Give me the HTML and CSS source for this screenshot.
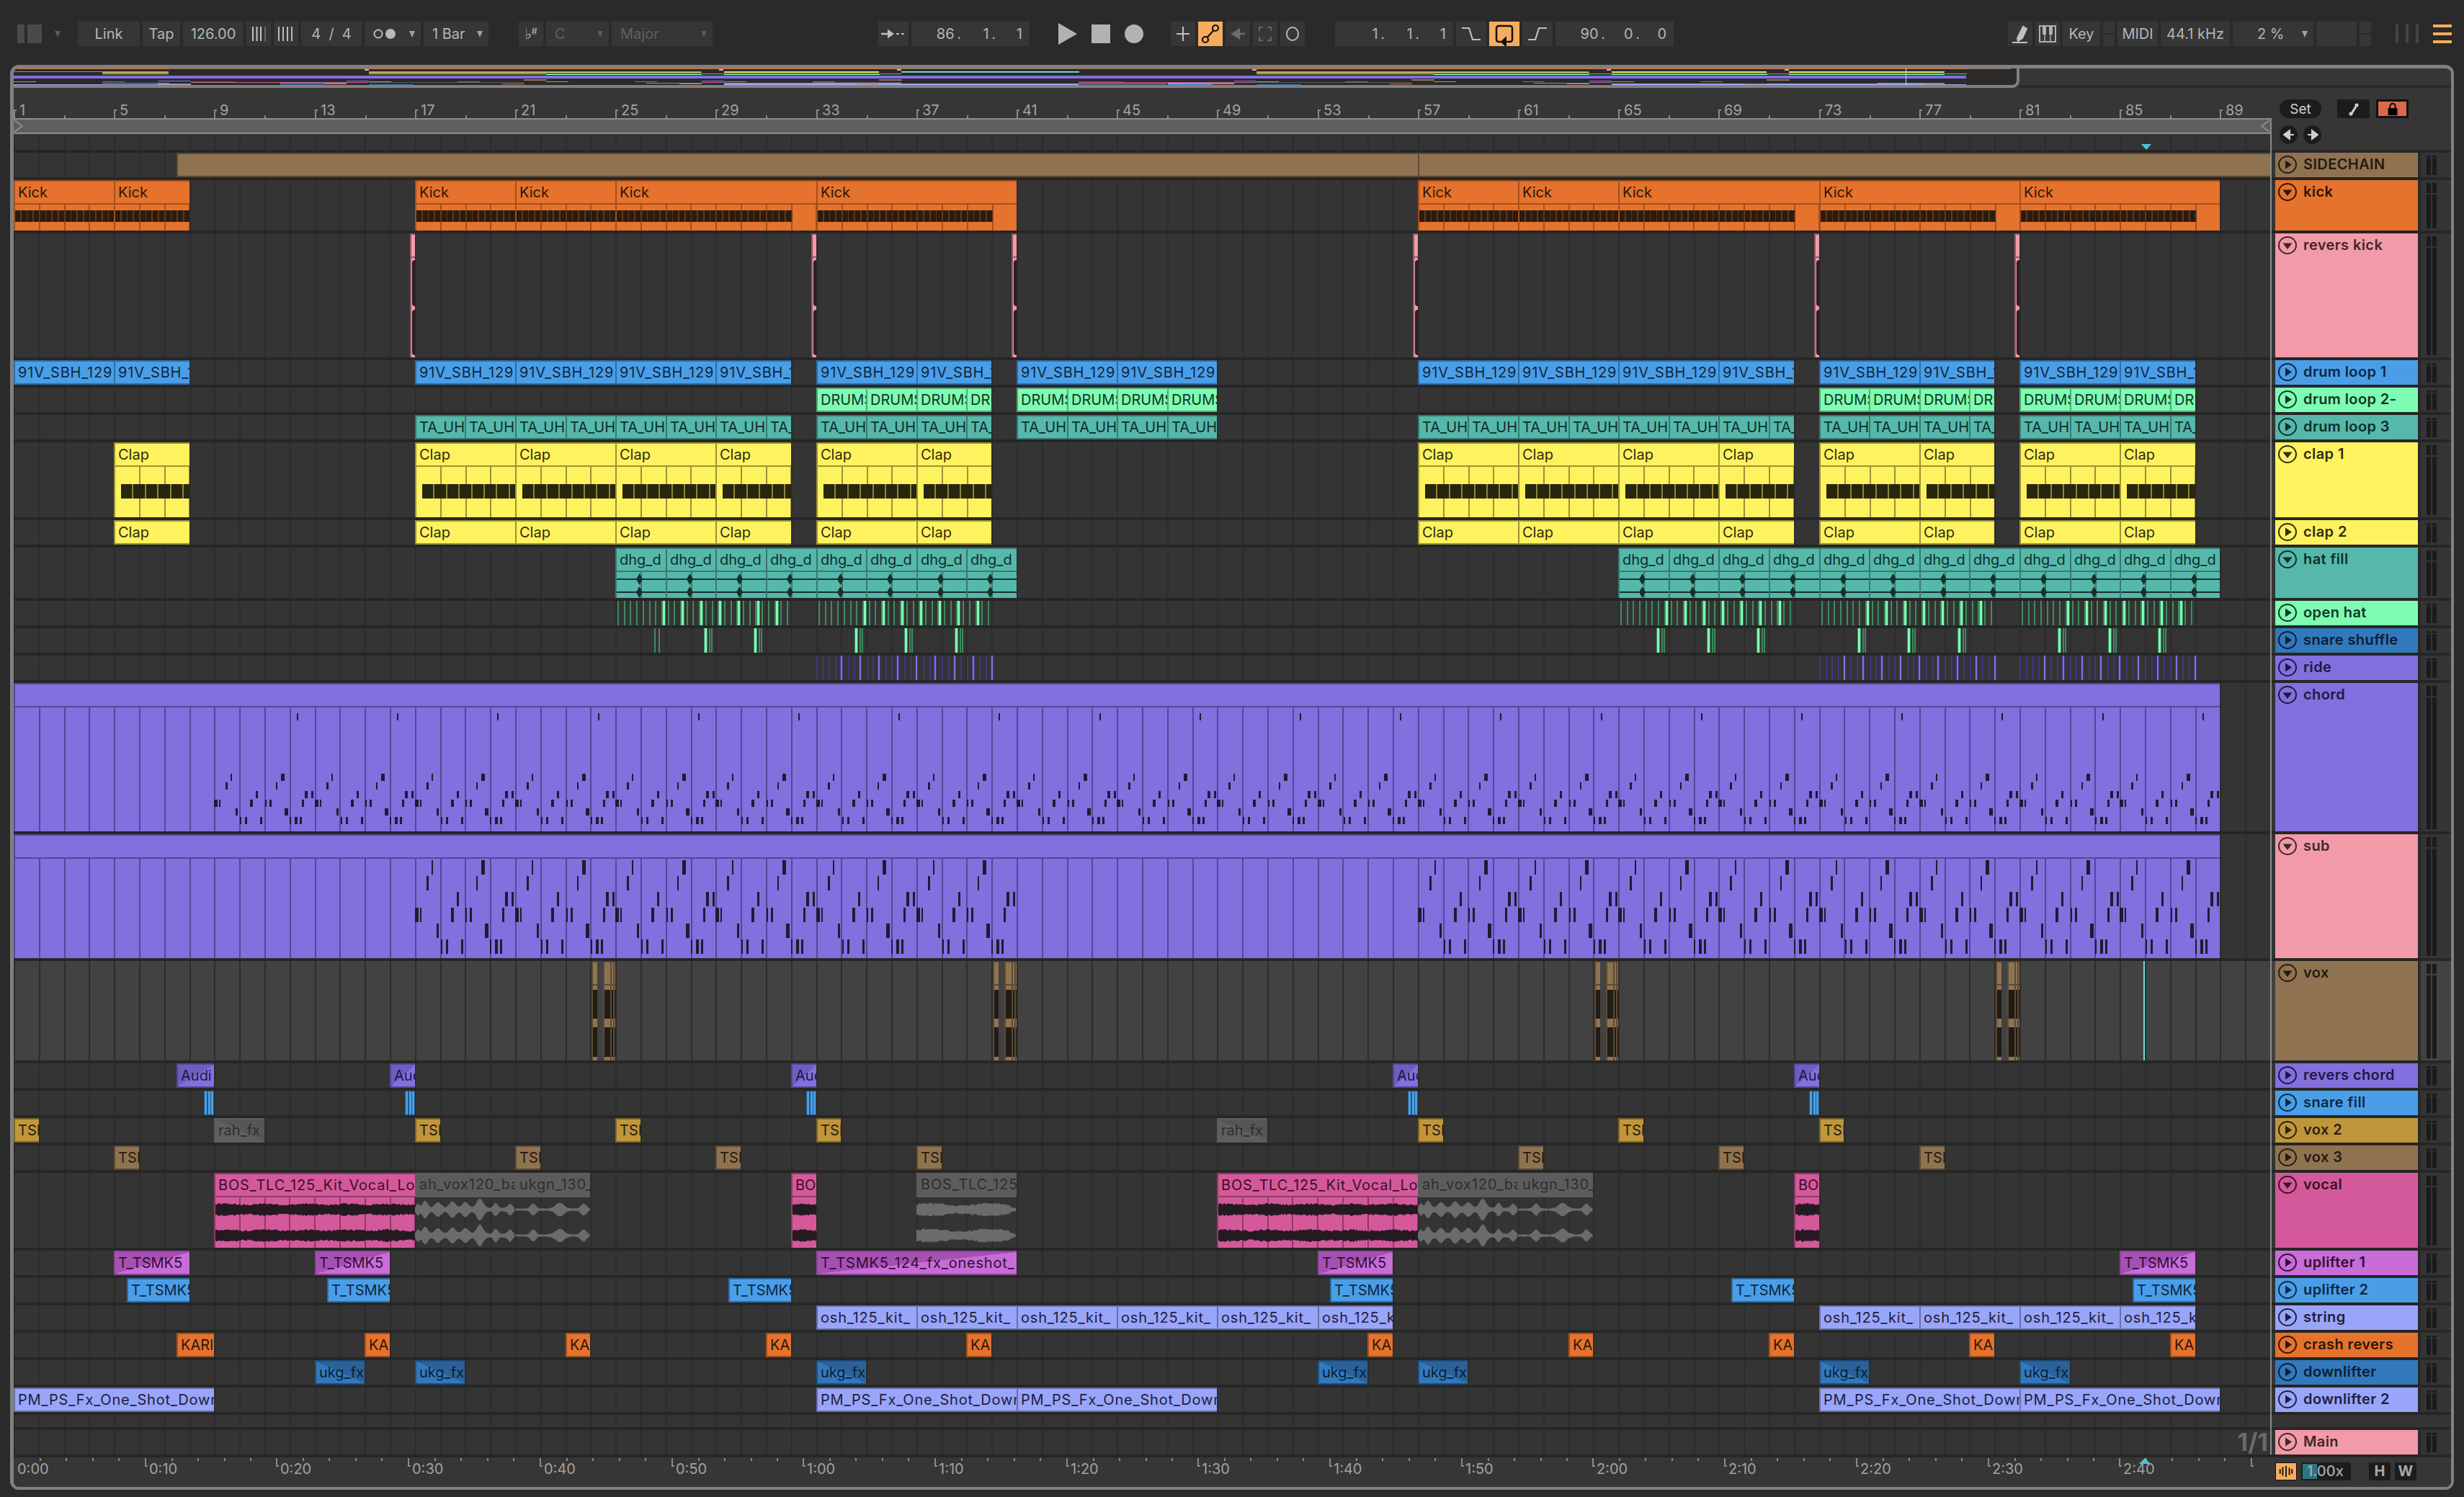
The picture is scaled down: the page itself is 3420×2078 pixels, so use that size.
FILE: index.html
```html
<!DOCTYPE html>
<html lang="en">
<head>
<meta charset="utf-8">
<title>Arrangement</title>
<link rel="stylesheet" href="styles.css">
</head>
<body>
<svg class="defs" width="0" height="0" aria-hidden="true">
  <symbol id="i-play" viewBox="0 0 26 25"><ellipse cx="13" cy="12.5" rx="12" ry="11.5" fill="none" stroke="currentColor" stroke-width="2"/><path d="M10 6.5 19 12.500 10 18.500Z" fill="currentColor"/></symbol>
  <symbol id="i-fold" viewBox="0 0 26 25"><ellipse cx="13" cy="12.5" rx="12" ry="11.5" fill="none" stroke="currentColor" stroke-width="2"/><path d="M6.500 9.500H19.500L13 18Z" fill="currentColor"/></symbol>
</svg>

<header class="toolbar">
  <div class="tb-layout"><i class="lay-a"></i><i class="lay-b"></i><i class="caret dim"></i></div>
  <div class="tb-group">
    <div class="btn w86">Link</div>
    <div class="btn w52">Tap</div>
    <div class="btn w84">126.00</div>
    <div class="btn w34"><svg class="ico" viewBox="0 0 34 34"><path d="M9 7v20M14.500 7v20M20 7v20" stroke="#c4c4c4" stroke-width="2"/><path d="M26 7v20" stroke="#777" stroke-width="1.500"/></svg></div>
    <div class="btn w34"><svg class="ico" viewBox="0 0 34 34"><path d="M7 7v20M13 7v20M19 7v20M25 7v20" stroke="#b8b8b8" stroke-width="2"/></svg></div>
    <div class="btn w84">4&nbsp;&nbsp;/&nbsp;&nbsp;4</div>
    <div class="btn w78 spread"><svg class="ico-oo" viewBox="0 0 36 24"><circle cx="7" cy="12" r="5.500" fill="none" stroke="#b8b8b8" stroke-width="2"/><circle cx="24" cy="12" r="7" fill="#b8b8b8"/></svg><i class="caret"></i></div>
    <div class="btn w90 spread"><span>1 Bar</span><i class="caret"></i></div>
  </div>
  <div class="tb-group ml42">
    <div class="btn w34 keysig"><span>♭</span><sup>#</sup></div>
    <div class="btn w87 spread off"><span>C</span><i class="caret dim"></i></div>
    <div class="btn w140 spread off"><span>Major</span><i class="caret dim"></i></div>
  </div>
  <div class="tb-group ml230">
    <div class="btn w42"><svg class="ico" viewBox="0 0 42 34"><path d="M4 17h12" stroke="#bdbdbd" stroke-width="2.500"/><path d="M13 10.500 22 17 13 23.500Z" fill="#bdbdbd"/><path d="M25 17h4M32 17h4" stroke="#bdbdbd" stroke-width="2"/></svg></div>
    <div class="btn w164 pos"><span class="seg-a">86&thinsp;.</span><span class="seg-b">1&thinsp;.</span><span class="seg-c">1</span></div>
  </div>
  <div class="tb-transport ml40">
    <svg class="t-play" viewBox="0 0 26 30"><path d="M0 0 26 15 0 30Z"/></svg>
    <i class="t-stop"></i>
    <i class="t-rec"></i>
  </div>
  <div class="tb-group ml38">
    <div class="btn w34"><svg class="ico" viewBox="0 0 34 34"><path d="M17 7v20M8 17h18" stroke="#c0c0c0" stroke-width="2"/></svg></div>
    <div class="btn w34 on"><svg class="ico" viewBox="0 0 34 34"><circle cx="10" cy="25" r="4" fill="none" stroke="#111" stroke-width="2.200"/><circle cx="24" cy="9" r="4" fill="none" stroke="#111" stroke-width="2.200"/><path d="M12.500 22 21.500 12" stroke="#111" stroke-width="2.200"/></svg></div>
    <div class="btn w34"><svg class="ico" viewBox="0 0 34 34"><path d="M8 17h8M19 11l-9 6 9 6ZM16 17h11" stroke="#6e6e6e" stroke-width="2.500" fill="#6e6e6e"/></svg></div>
    <div class="btn w34"><svg class="ico" viewBox="0 0 34 34"><path d="M14 8H9v5M20 8h5v5M14 26H9v-5M20 26h5v-5" stroke="#666" stroke-width="2" fill="none"/></svg></div>
    <div class="btn w34"><svg class="ico" viewBox="0 0 34 34"><ellipse cx="17" cy="17" rx="8" ry="9" fill="none" stroke="#b8b8b8" stroke-width="2"/></svg></div>
  </div>
  <div class="tb-group ml42">
    <div class="btn w164 pos"><span class="seg-a">1&thinsp;.</span><span class="seg-b">1&thinsp;.</span><span class="seg-c">1</span></div>
    <div class="btn w42"><svg class="ico" viewBox="0 0 42 34"><path d="M8 9h10l5 16h11" stroke="#c0c0c0" stroke-width="2.200" fill="none"/></svg></div>
    <div class="btn w42 on"><svg class="ico" viewBox="0 0 42 34"><path d="M16 28h-3a3 3 0 0 1-3-3V9a3 3 0 0 1 3-3h16a3 3 0 0 1 3 3v16a3 3 0 0 1-3 3h-3" stroke="#111" stroke-width="2.500" fill="none"/><path d="M26 28H19M23 22.500l-6 5.500 6 5.500Z" stroke="#111" stroke-width="2" fill="#111"/></svg></div>
    <div class="btn w42"><svg class="ico" viewBox="0 0 42 34"><path d="M8 25h10l5-16h11" stroke="#c0c0c0" stroke-width="2.200" fill="none"/></svg></div>
    <div class="btn w164 pos"><span class="seg-a">90&thinsp;.</span><span class="seg-b">0&thinsp;.</span><span class="seg-c">0</span></div>
  </div>
  <div class="tb-group ml464">
    <div class="btn w34"><svg class="ico" viewBox="0 0 34 34"><path d="M13 23 21 7l5 3-6 13-6 4ZM6 29h21" fill="#c0c0c0" stroke="#c0c0c0" stroke-width="2"/></svg></div>
    <div class="btn w34"><svg class="ico" viewBox="0 0 34 34"><rect x="6" y="6" width="22" height="22" fill="none" stroke="#b0b0b0" stroke-width="2"/><path d="M13 6v22M21 6v22" stroke="#b0b0b0" stroke-width="1.500"/><path d="M10 6h5v12h-5ZM19 6h5v12h-5Z" fill="#b0b0b0"/></svg></div>
    <div class="btn w52">Key</div>
    <div class="split w16"><i></i><i></i></div>
    <div class="btn w56">MIDI</div>
    <div class="btn w96">44.1 kHz</div>
    <div class="btn w112 spread center-left"><span>2 %</span><i class="caret"></i></div>
    <div class="btn w56"></div>
    <div class="split w16"><i></i><i></i></div>
  </div>
  <div class="tb-bars ml34"><i></i><i></i><i></i></div>
  <div class="tb-menu ml18"><i></i><i></i><i></i></div>
</header>

<main class="frame">
  <div class="overview">
    <div class="ov-track" id="ov"></div>
    <div class="ov-rest"></div>
  </div>

  <div class="top-area">
    <div class="top-left">
      <div class="ruler" id="bars"></div>
      <div class="loopstrip">
        <svg class="loop-l" viewBox="0 0 14 18"><path d="M1 1 12 9 1 17" fill="none" stroke="#8d8d8d" stroke-width="2"/></svg>
        <svg class="loop-r" viewBox="0 0 14 18"><path d="M13 1 2 9 13 17" fill="none" stroke="#8d8d8d" stroke-width="2"/></svg>
      </div>
      <div class="toplane lane-grid"><i class="cursor-tri"></i></div>
    </div>
    <div class="side">
      <div class="side-row">
        <div class="pill set">Set</div>
        <div class="sq"><svg viewBox="0 0 26 20" class="sq-ico"><path d="M9 18 16 7" stroke="#d0d0d0" stroke-width="3"/><circle cx="17" cy="5" r="2.500" fill="#d0d0d0"/><circle cx="9" cy="17" r="2.500" fill="#d0d0d0"/></svg></div>
        <div class="sq lock"><svg viewBox="0 0 26 22" class="sq-ico"><path d="M9 10V7a4 4 0 0 1 8 0v3" fill="none" stroke="#000" stroke-width="2"/><rect x="6" y="10" width="14" height="11" fill="#000"/></svg></div>
      </div>
      <div class="side-row small">
        <div class="pill arrow"><svg viewBox="0 0 16 16"><path d="M15 8H7M9 2 1 8l8 6Z" stroke="#cfcfcf" stroke-width="2" fill="#cfcfcf"/></svg></div>
        <div class="pill arrow"><svg viewBox="0 0 16 16"><path d="M1 8h8M7 2l8 6-8 6Z" stroke="#cfcfcf" stroke-width="2" fill="#cfcfcf"/></svg></div>
      </div>
    </div>
  </div>

  <section class="tracks">
    <div class="row h34 t-tan"><div class="lane" data-track="sidechain"></div><div class="head"><svg class="fold"><use href="#i-play"/></svg><span class="name">SIDECHAIN</span></div><div class="gutter"></div><div class="meter"><i></i><i></i></div></div>
    <div class="row tall h70 t-orange"><div class="lane" data-track="kick"></div><div class="head"><svg class="fold"><use href="#i-fold"/></svg><span class="name">kick</span></div><div class="gutter"></div><div class="meter"><i></i><i></i></div></div>
    <div class="row tall h172 t-pink"><div class="lane" data-track="reverskick"></div><div class="head"><svg class="fold"><use href="#i-fold"/></svg><span class="name">revers kick</span></div><div class="gutter"></div><div class="meter"><i></i><i></i></div></div>
    <div class="row h34 t-blue"><div class="lane" data-track="dl1"></div><div class="head"><svg class="fold"><use href="#i-play"/></svg><span class="name">drum loop 1</span></div><div class="gutter"></div><div class="meter"><i></i><i></i></div></div>
    <div class="row h34 t-mint"><div class="lane" data-track="dl2"></div><div class="head"><svg class="fold"><use href="#i-play"/></svg><span class="name">drum loop 2-</span></div><div class="gutter"></div><div class="meter"><i></i><i></i></div></div>
    <div class="row h34 t-teal"><div class="lane" data-track="dl3"></div><div class="head"><svg class="fold"><use href="#i-play"/></svg><span class="name">drum loop 3</span></div><div class="gutter"></div><div class="meter"><i></i><i></i></div></div>
    <div class="row tall h104 t-yellow"><div class="lane" data-track="clap1"></div><div class="head"><svg class="fold"><use href="#i-fold"/></svg><span class="name">clap 1</span></div><div class="gutter"></div><div class="meter"><i></i><i></i></div></div>
    <div class="row h34 t-yellow"><div class="lane" data-track="clap2"></div><div class="head"><svg class="fold"><use href="#i-play"/></svg><span class="name">clap 2</span></div><div class="gutter"></div><div class="meter"><i></i><i></i></div></div>
    <div class="row tall h70 t-teal"><div class="lane" data-track="hat"></div><div class="head"><svg class="fold"><use href="#i-fold"/></svg><span class="name">hat fill</span></div><div class="gutter"></div><div class="meter"><i></i><i></i></div></div>
    <div class="row h34 t-mint"><div class="lane" data-track="openhat"></div><div class="head"><svg class="fold"><use href="#i-play"/></svg><span class="name">open hat</span></div><div class="gutter"></div><div class="meter"><i></i><i></i></div></div>
    <div class="row h34 t-navy"><div class="lane" data-track="snare"></div><div class="head"><svg class="fold"><use href="#i-play"/></svg><span class="name">snare shuffle</span></div><div class="gutter"></div><div class="meter"><i></i><i></i></div></div>
    <div class="row h34 t-violet"><div class="lane" data-track="ride"></div><div class="head"><svg class="fold"><use href="#i-play"/></svg><span class="name">ride</span></div><div class="gutter"></div><div class="meter"><i></i><i></i></div></div>
    <div class="row tall h206 t-violet"><div class="lane" data-track="chord"></div><div class="head"><svg class="fold"><use href="#i-fold"/></svg><span class="name">chord</span></div><div class="gutter"></div><div class="meter"><i></i><i></i></div></div>
    <div class="row tall h172 t-pink"><div class="lane" data-track="sub"></div><div class="head"><svg class="fold"><use href="#i-fold"/></svg><span class="name">sub</span></div><div class="gutter"></div><div class="meter"><i></i><i></i></div></div>
    <div class="row tall h138 t-tan sel"><div class="lane" data-track="vox"></div><div class="head"><svg class="fold"><use href="#i-fold"/></svg><span class="name">vox</span></div><div class="gutter"></div><div class="meter"><i></i><i></i></div></div>
    <div class="row h34 t-violet"><div class="lane" data-track="rchord"></div><div class="head"><svg class="fold"><use href="#i-play"/></svg><span class="name">revers chord</span></div><div class="gutter"></div><div class="meter"><i></i><i></i></div></div>
    <div class="row h34 t-blue"><div class="lane" data-track="sfill"></div><div class="head"><svg class="fold"><use href="#i-play"/></svg><span class="name">snare fill</span></div><div class="gutter"></div><div class="meter"><i></i><i></i></div></div>
    <div class="row h34 t-gold"><div class="lane" data-track="vox2"></div><div class="head"><svg class="fold"><use href="#i-play"/></svg><span class="name">vox 2</span></div><div class="gutter"></div><div class="meter"><i></i><i></i></div></div>
    <div class="row h34 t-tan"><div class="lane" data-track="vox3"></div><div class="head"><svg class="fold"><use href="#i-play"/></svg><span class="name">vox 3</span></div><div class="gutter"></div><div class="meter"><i></i><i></i></div></div>
    <div class="row tall h104 t-magenta"><div class="lane" data-track="vocal"></div><div class="head"><svg class="fold"><use href="#i-fold"/></svg><span class="name">vocal</span></div><div class="gutter"></div><div class="meter"><i></i><i></i></div></div>
    <div class="row h34 t-lilac"><div class="lane" data-track="up1"></div><div class="head"><svg class="fold"><use href="#i-play"/></svg><span class="name">uplifter 1</span></div><div class="gutter"></div><div class="meter"><i></i><i></i></div></div>
    <div class="row h34 t-blue"><div class="lane" data-track="up2"></div><div class="head"><svg class="fold"><use href="#i-play"/></svg><span class="name">uplifter 2</span></div><div class="gutter"></div><div class="meter"><i></i><i></i></div></div>
    <div class="row h34 t-peri"><div class="lane" data-track="string"></div><div class="head"><svg class="fold"><use href="#i-play"/></svg><span class="name">string</span></div><div class="gutter"></div><div class="meter"><i></i><i></i></div></div>
    <div class="row h34 t-orange"><div class="lane" data-track="crash"></div><div class="head"><svg class="fold"><use href="#i-play"/></svg><span class="name">crash revers</span></div><div class="gutter"></div><div class="meter"><i></i><i></i></div></div>
    <div class="row h34 t-navy"><div class="lane" data-track="down"></div><div class="head"><svg class="fold"><use href="#i-play"/></svg><span class="name">downlifter</span></div><div class="gutter"></div><div class="meter"><i></i><i></i></div></div>
    <div class="row h34 t-peri"><div class="lane" data-track="down2"></div><div class="head"><svg class="fold"><use href="#i-play"/></svg><span class="name">downlifter 2</span></div><div class="gutter"></div><div class="meter"><i></i><i></i></div></div>
    <div class="row h17 empty"><div class="lane"></div></div>
    <div class="row h34 t-pink"><div class="lane"><span class="pagenum">1/1</span></div><div class="head"><svg class="fold"><use href="#i-play"/></svg><span class="name">Main</span></div><div class="gutter"></div><div class="meter"><i></i><i></i></div></div>
  </section>

  <div class="timebar">
    <div class="time-lane" id="times"></div>
    <div class="time-side">
      <div class="wavebtn"><svg viewBox="0 0 30 25"><path d="M6 9v7M10 6v13M15 4v17M20 7v11M24 9v7" stroke="#111" stroke-width="2"/></svg></div>
      <div class="speed"><span class="speed-fill"></span><span class="speed-text">1.00x</span></div>
      <div class="keybtn">H</div>
      <div class="keybtn">W</div>
    </div>
  </div>

  <div class="vline"></div>
</main>
<script src="script.js"></script>
</body>
</html>
```
FILE: styles.css
```css
* { box-sizing: border-box; }
html, body { margin: 0; padding: 0; }
body {
  width: 3420px;
  height: 2078px;
  overflow: hidden;
  background: #2a2a2a;
  font-family: "Inter", "DejaVu Sans", sans-serif;
  font-size: 20px;
  color: #b5b5b5;
}
.defs { position: absolute; }
i { display: block; }

/* themes */
.t-orange  { --c: #e5722d; --d: #a4501e; --t: #2c1608; }
.t-pink    { --c: #f29aa8; --d: #8f5a66; --t: #3e262c; }
.t-blue    { --c: #4a9ee8; --d: #2f6ca6; --t: #0e2740; }
.t-mint    { --c: #7dfcb2; --d: #53a87a; --t: #123524; }
.t-teal    { --c: #55b8aa; --d: #37796f; --t: #0f2e2a; }
.t-yellow  { --c: #fef25e; --d: #9a923a; --t: #2e2b10; }
.t-navy    { --c: #3278bc; --d: #1f4f80; --t: #0a1e33; }
.t-violet  { --c: #836fdd; --d: #54479a; --t: #1e1840; }
.t-tan     { --c: #8f7350; --d: #5c4a34; --t: #241a10; }
.t-gold    { --c: #bf963c; --d: #7f6428; --t: #2a2010; }
.t-magenta { --c: #d4599a; --d: #8e3a67; --t: #3a1028; }
.t-lilac   { --c: #c86cd8; --d: #8a4a96; --t: #2e1034; }
.t-peri    { --c: #99a5f8; --d: #6670a8; --t: #1c2040; }
.t-grey    { --c: #5c5c5c; --d: #5c5c5c; --t: #2e2e2e; }

/* toolbar */
.toolbar {
  display: flex;
  align-items: flex-start;
  height: 90px;
  padding: 30px 0 0 24px;
}
.tb-layout { display: flex; width: 84px; height: 34px; align-items: center; gap: 4px; }
.lay-a { width: 10px; height: 26px; background: #4a4a4a; }
.lay-b { width: 20px; height: 26px; background: #4a4a4a; }
.tb-layout .caret { margin-left: 14px; }
.tb-group { display: flex; gap: 4px; }
.btn {
  display: flex;
  align-items: center;
  justify-content: center;
  height: 34px;
  background: #363636;
  line-height: 34px;
  white-space: nowrap;
  flex: none;
}
.btn.spread { justify-content: space-between; padding: 0 8px 0 12px; }
.btn.center-left { padding-left: 34px; }
.btn.off { color: #5f5f5f; }
.btn.on { background: #f5ad5d; }
.btn .ico { width: 100%; height: 34px; display: block; }
.ico-oo { width: 36px; height: 24px; }
.keysig { font-size: 20px; gap: 0; line-height: 1; }
.keysig sup { font-size: 13px; margin-top: -8px; }
.w16 { width: 16px; } .w34 { width: 34px; } .w42 { width: 42px; } .w52 { width: 52px; }
.w56 { width: 56px; } .w78 { width: 78px; } .w84 { width: 84px; } .w86 { width: 86px; }
.w87 { width: 87px; } .w90 { width: 90px; } .w96 { width: 96px; } .w112 { width: 112px; }
.w140 { width: 140px; } .w164 { width: 164px; }
.ml18 { margin-left: 18px; } .ml34 { margin-left: 34px; } .ml38 { margin-left: 38px; }
.ml40 { margin-left: 40px; } .ml42 { margin-left: 42px; } .ml230 { margin-left: 230px; }
.ml464 { margin-left: 464px; }
.caret {
  width: 0; height: 0;
  border-left: 4.5px solid transparent;
  border-right: 4.5px solid transparent;
  border-top: 9px solid #a0a0a0;
  flex: none;
}
.caret.dim { border-top-color: #5a5a5a; }
.pos { justify-content: flex-end; padding-right: 10px; }
.seg-a, .seg-b, .seg-c { display: block; text-align: right; }
.seg-b { width: 48px; }
.seg-c { width: 37px; }
.split { display: flex; flex-direction: column; gap: 2px; height: 34px; flex: none; }
.split i { flex: 1; background: #363636; }
.tb-transport { display: flex; gap: 20px; align-items: center; height: 34px; }
.t-play { width: 26px; height: 30px; fill: #b2b2b2; display: block; }
.t-stop { width: 26px; height: 26px; background: #b2b2b2; }
.t-rec { width: 26px; height: 26px; border-radius: 50%; background: #b2b2b2; }
.tb-bars { display: flex; gap: 8px; height: 34px; padding: 4px 0; }
.tb-bars i { width: 4px; height: 26px; background: #444; margin-right: 2px; }
.tb-menu { display: flex; flex-direction: column; gap: 7px; width: 26px; padding-top: 4px; }
.tb-menu i { height: 4px; background: #f5ad5d; }

/* frame */
.frame {
  position: relative;
  width: 3392px;
  height: 1978px;
  margin-left: 14px;
  border: 5px solid #808080;
  border-width: 5px 4px 4px 5px;
  border-radius: 12px;
  overflow: hidden;
  background: #343434;
}
.overview { display: flex; height: 27px; }
.ov-track {
  position: relative;
  width: 2784px;
  height: 27px;
  flex: none;
  background: #2a2a2a;
  border-right: 4px solid #808080;
  border-bottom: 4px solid #808080;
  border-bottom-right-radius: 10px;
  overflow: hidden;
}
.ov-rest { flex: 1; background: #373737; border-bottom: 4px solid #2a2a2a; }
.mini { position: absolute; background: var(--c); }
.ov-cursor { position: absolute; top: 0; width: 1px; height: 100%; background: #cfcfcf; }

.top-area { display: flex; height: 90px; border-bottom: 4px solid #262626; background: #363636; }
.top-left { width: 3132px; flex: none; }
.ruler { position: relative; height: 42px; background: #363636; overflow: hidden; }
.bar-num { position: absolute; top: 19px; line-height: 24px; color: #a2a2a2; font-size: 20px; }
.bar-tick { position: absolute; top: 30px; width: 2px; height: 12px; background: #8a8a8a; }
.bar-tick::before { content: ""; position: absolute; top: 0; left: 0; width: 4px; height: 2px; background: #8a8a8a; }
.bar-minor { position: absolute; top: 38px; width: 2px; height: 4px; background: #8a8a8a; }
.loopstrip {
  position: relative;
  height: 22px;
  background: #5e5e5e;
  border-top: 2px solid #8d8d8d;
  border-bottom: 2px solid #8d8d8d;
}
.loop-l, .loop-r { position: absolute; top: 0; width: 14px; height: 18px; }
.loop-l { left: 0; }
.loop-r { right: 0; }
.lane-grid { background: #343434 repeating-linear-gradient(90deg, #2c2c2c 0 2px, transparent 2px 34.8px); }
.toplane { position: relative; height: 22px; }
.cursor-tri {
  position: absolute;
  left: 2953px;
  top: 14px;
  width: 0; height: 0;
  border-left: 7px solid transparent;
  border-right: 7px solid transparent;
  border-top: 8px solid #4cc3d9;
}
.side { flex: 1; padding: 16px 0 0 13px; }
.side-row { display: flex; align-items: center; height: 26px; gap: 9px; }
.side-row.small { margin-top: 10px; gap: 8px; }
.pill {
  display: flex; align-items: center; justify-content: center;
  height: 26px; border-radius: 13px; background: #1c1c1c; color: #cfcfcf;
}
.pill.set { width: 58px; margin-right: 13px; font-size: 19px; }
.pill.arrow { width: 25px; }
.pill.arrow svg { width: 16px; height: 16px; display: block; }
.sq { display: flex; align-items: center; justify-content: center; width: 45px; height: 26px; background: #1c1c1c; }
.sq.lock { background: #d9694a; border: 3px solid #111; }
.sq-ico { width: 26px; height: 20px; display: block; }

/* tracks */
.row {
  display: flex;
  border-bottom: 4px solid #262626;
  background: #343434;
}
.row.sel { background: #424242; }
.h17 { height: 21px; } .h34 { height: 38px; } .h70 { height: 74px; } .h104 { height: 108px; }
.h138 { height: 142px; } .h172 { height: 176px; } .h206 { height: 210px; }
.lane {
  position: relative;
  width: 3132px;
  flex: none;
  margin-right: 7px;
  overflow: hidden;
  background: repeating-linear-gradient(90deg, #2c2c2c 0 2px, transparent 2px 34.8px);
}
.head {
  display: flex;
  align-items: flex-start;
  gap: 9px;
  width: 198px;
  flex: none;
  padding: 4px 0 0 4px;
  background: var(--c);
  color: var(--t);
}
.fold { width: 26px; height: 25px; flex: none; display: block; }
.name { font-size: 20px; font-weight: 600; line-height: 25px; letter-spacing: 0.4px; white-space: nowrap; }
.gutter { width: 4px; background: #2a2a2a; flex: none; }
.meter { display: flex; gap: 2px; width: 42px; padding: 4px 0 3px 8px; flex: none; }
.meter i {
  width: 6px;
  background: linear-gradient(#1b1b1b 0 3px, transparent 3px 4px, #1b1b1b 4px);
}
.tall .meter i { background: linear-gradient(#1b1b1b 0 14px, transparent 14px 16px, #1b1b1b 16px); }
.pagenum {
  position: absolute; right: 3px; top: 0;
  font-size: 34px; font-weight: 700; line-height: 34px; color: #6a6a6a;
}

/* clips */
.clip {
  position: absolute;
  top: 0;
  bottom: 0;
  background: var(--c);
  color: var(--t);
  border: 2px solid var(--d);
  border-right: 0;
  overflow: hidden;
}
.clip-name {
  display: block;
  padding-left: 4px;
  font-size: 20px;
  line-height: 30px;
  height: 30px;
  white-space: nowrap;
  overflow: hidden;
}
.clip-name.wide { letter-spacing: 0.8px; }
.clip.bodied { border-bottom: 0; }
.clip.bodied .clip-name { height: 32px; border-bottom: 2px solid var(--d); }
.clip-body {
  position: relative;
  height: calc(100% - 32px);
  background: repeating-linear-gradient(90deg, transparent 0 32.8px, var(--d) 32.8px 34.8px);
}
.clip.diag { background: linear-gradient(to bottom right, var(--d) 50%, var(--c) 50%); }
.clip.diag2 { background: linear-gradient(to top right, var(--c) 50%, var(--d) 50%); }
.t-violet .clip.diag { background: linear-gradient(to bottom right, #6e5cc4 50%, var(--c) 50%); }
.t-lilac .clip.diag { background: linear-gradient(to bottom right, #a650b4 50%, var(--c) 50%); }
.t-navy .clip.diag2 { background: linear-gradient(to top right, var(--c) 50%, #2a6299 50%); }
.clip.rah { background: linear-gradient(to top right, #5f5f5f 50%, #565656 50%); border-color: #5c5c5c; }
.clip.ghost { background: transparent; border: 0; }
.clip.ghost .clip-name { background: var(--c); height: 34px; line-height: 32px; padding-left: 6px; border: 0; }
.clip.ghost .clip-body { background: none; height: 70px; }
.band { position: absolute; left: 0; top: 8px; height: 16px;
  background: repeating-linear-gradient(90deg, #2a1c10 0 7px, #60381a 7px 8.7px); }
.band-clap { position: absolute; left: 8px; right: 0; top: 24px; height: 20px;
  background: repeating-linear-gradient(90deg, #28260f 0 15.4px, #8d853a 15.4px 17.4px); }
.hline { position: absolute; left: 0; right: 0; height: 2px; background: #16302c; }
.hline.a { top: 9px; } .hline.b { top: 27px; }
.dia { position: absolute; left: 27px; width: 9px; height: 16px; background: #16302c;
  clip-path: polygon(50% 0, 100% 50%, 50% 100%, 0 50%); }
.dia.a { top: 2px; } .dia.b { top: 20px; }
.rev-w { position: absolute; right: 0; width: 4px; background: #2a2022; border-radius: 4px 0 0 4px; }
.rev-w.a { top: 3px; height: 64px; }
.rev-w.b { top: 72px; height: 63px; }
.vx-w { position: absolute; left: 0; right: 0; background: #201c16; }
.vx-w.a { top: 6px; height: 40px; }
.vx-w.b { top: 58px; height: 41px; }
.wave { position: absolute; left: 0; top: 0; display: block; }
.tick { position: absolute; }
.note { background: #1f1b33; }
.hat-d { background: #3e8a5f; }
.hat-b { background: #7dfcb2; box-shadow: 0 0 0 1px #3e8a5f; }
.ride-d { background: #3f3580; }
.ride-b { background: #8470dd; box-shadow: 0 0 0 1px #3f3580; }
.fill-b { background: #4a9ee8; }
.fill-d { background: #25567f; }
.playhead { position: absolute; left: 2956px; top: 0; bottom: 0; width: 2px; background: #66dbe6; }

/* time bar */
.timebar { display: flex; height: 41px; background: #363636; }
.time-lane { position: relative; width: 3132px; flex: none; overflow: hidden; }
.time-major { position: absolute; top: 1px; width: 2px; height: 12px; background: #8a8a8a; }
.time-major::after { content: ""; position: absolute; bottom: 0; left: 0; width: 4px; height: 2px; background: #8a8a8a; }
.time-minor { position: absolute; top: 1px; width: 2px; height: 4px; background: #8a8a8a; }
.time-label { position: absolute; top: 4px; line-height: 24px; color: #a2a2a2; }
.time-tri {
  position: absolute; left: 2950px; top: 1px; width: 0; height: 0;
  border-left: 8px solid transparent; border-right: 8px solid transparent;
  border-bottom: 8px solid #4cc3d9;
}
.time-side { display: flex; align-items: flex-start; gap: 6px; padding: 7px 0 0 7px; flex: 1; }
.wavebtn { width: 30px; height: 25px; background: #f5ad5d; border: 1px solid #111; }
.wavebtn svg { width: 100%; height: 100%; display: block; }
.speed { position: relative; width: 69px; height: 25px; background: #1c1c1c; margin-right: 19px; }
.speed-fill { position: absolute; left: 2px; top: 2px; bottom: 2px; width: 20px; background: #2d7482; }
.speed-text { position: absolute; left: 8px; top: 0; line-height: 25px; color: #a8a8a8; font-weight: 500; }
.keybtn { width: 30px; height: 25px; background: #1c1c1c; color: #a8a8a8; text-align: center; line-height: 25px; font-weight: 700; }

.vline { position: absolute; left: 3132px; top: 69px; width: 2px; height: 1855px; background: #8a8a8a; }
```
FILE: script.js
```js
(function () {
  var BAR = 34.8, OV = 30.8, OVK = 0.0131;
  var px = function (b) { return Math.round((b - 1) * BAR); };
  var seed = 12345;
  function rnd() { seed = (seed * 1103515245 + 12345) & 0x7fffffff; return seed / 0x7fffffff; }

  var lanes = {};
  document.querySelectorAll('.lane[data-track]').forEach(function (l) { lanes[l.dataset.track] = l; });
  var ov = document.getElementById('ov');
  var frameTop = document.querySelector('.tracks').getBoundingClientRect().top;

  function themeOf(lane) {
    var m = lane.parentNode.className.match(/t-\w+/);
    return m ? m[0] : '';
  }
  function mini(lane, b, e, theme, hOverride) {
    var r = lane.getBoundingClientRect();
    var d = document.createElement('i');
    d.className = 'mini ' + (theme || themeOf(lane));
    d.style.left = Math.round((b - 1) * OV) + 'px';
    d.style.width = Math.max(1, Math.round((e - b) * OV)) + 'px';
    d.style.top = Math.round((r.top - frameTop) * OVK) + 'px';
    d.style.height = (hOverride || Math.max(1, Math.round(r.height * OVK))) + 'px';
    ov.appendChild(d);
  }
  function clip(track, b, e, name, o) {
    o = o || {};
    var lane = lanes[track];
    var c = document.createElement('div');
    c.className = 'clip' + (o.cls ? ' ' + o.cls : '') + (o.theme ? ' ' + o.theme : '') + (o.body ? ' bodied' : '');
    var l = px(b);
    c.style.left = l + 'px';
    c.style.width = (o.w || (px(e) - l)) + 'px';
    if (o.offset) c.style.left = (l + o.offset) + 'px';
    var body = null;
    if (name !== null) {
      var n = document.createElement('span');
      n.className = 'clip-name' + (name && name.length >= 8 ? ' wide' : '');
      n.textContent = name || '';
      c.appendChild(n);
    }
    if (o.body) {
      body = document.createElement('div');
      body.className = 'clip-body';
      c.appendChild(body);
    }
    lane.appendChild(c);
    mini(lane, b, e, o.theme);
    return { el: c, body: body };
  }
  function seq(track, bars, name, o) {
    var out = [];
    for (var i = 0; i < bars.length - 1; i++) out.push(clip(track, bars[i], bars[i + 1], name, o));
    return out;
  }
  function tick(lane, x, top, w, h, cls) {
    var t = document.createElement('i');
    t.className = 'tick ' + cls;
    t.style.left = Math.round(x) + 'px';
    t.style.top = top + 'px';
    t.style.width = w + 'px';
    t.style.height = h + 'px';
    lane.appendChild(t);
  }
  function range(a, b, s) { var r = []; for (var v = a; v <= b; v += s) r.push(v); return r; }
  function add(el, cls, style) {
    var i = document.createElement('i');
    i.className = cls;
    if (style) for (var k in style) i.style[k] = style[k];
    el.appendChild(i);
    return i;
  }

  /* sidechain */
  clip('sidechain', 7.5, 57, '');
  clip('sidechain', 57, 91, '');

  /* kick */
  [[1, 5, 8], [5, 8, 8], [17, 21, 21], [21, 25, 25], [25, 33, 32], [33, 41, 40], [57, 61, 61], [61, 65, 65], [65, 73, 72], [73, 81, 80], [81, 89, 88]].forEach(function (k) {
    var c = clip('kick', k[0], k[1], 'Kick', { body: true });
    add(c.body, 'band', { width: (px(k[2]) - px(k[0])) + 'px' });
  });

  /* revers kick slivers */
  [17, 33, 41, 57, 73, 81].forEach(function (e) {
    var c = clip('reverskick', e - 0.2, e, '', { body: true });
    add(c.body, 'rev-w a');
    add(c.body, 'rev-w b');
  });

  /* drum loops */
  [[1, 5, 8], [17, 21, 25, 29, 32], [33, 37, 40], [41, 45, 49], [57, 61, 65, 69, 72], [73, 77, 80], [81, 85, 88]].forEach(function (s) { seq('dl1', s, '91V_SBH_129'); });
  [[33, 35, 37, 39, 40], [41, 43, 45, 47, 49], [73, 75, 77, 79, 80], [81, 83, 85, 87, 88]].forEach(function (s) { seq('dl2', s, 'DRUMS'); });
  [[17, 19, 21, 23, 25, 27, 29, 31, 32], [33, 35, 37, 39, 40], [41, 43, 45, 47, 49], [57, 59, 61, 63, 65, 67, 69, 71, 72], [73, 75, 77, 79, 80], [81, 83, 85, 87, 88]].forEach(function (s) { seq('dl3', s, 'TA_UH'); });

  /* claps */
  var clapSets = [[5, 8], [17, 21, 25, 29, 32], [33, 37, 40], [57, 61, 65, 69, 72], [73, 77, 80], [81, 85, 88]];
  clapSets.forEach(function (s) {
    seq('clap1', s, 'Clap', { body: true }).forEach(function (c) { add(c.body, 'band-clap'); });
    seq('clap2', s, 'Clap');
  });

  /* hat fill */
  [range(25, 41, 2), range(65, 89, 2)].forEach(function (s) {
    seq('hat', s, 'dhg_d', { body: true }).forEach(function (c) {
      add(c.body, 'hline a'); add(c.body, 'hline b');
      add(c.body, 'dia a'); add(c.body, 'dia b');
    });
  });

  /* open hat */
  [[25, 32], [33, 40], [65, 72], [73, 80], [81, 88]].forEach(function (s) {
    var x0 = px(s[0]), x1 = px(s[1]);
    for (var x = x0 + 3; x < x1; x += 8.7) tick(lanes.openhat, x, 0, 2, 34, 'hat-d');
    for (var y = x0 + 66; y < x1; y += 26.1) {
      tick(lanes.openhat, y, 0, 3, 34, 'hat-b');
    }
    mini(lanes.openhat, s[0], s[1], 't-mint');
  });

  /* snare shuffle */
  [26.55, 28.55, 30.55, 34.55, 36.55, 38.55, 66.55, 68.55, 70.55, 74.55, 76.55, 78.55, 82.55, 84.55, 86.55].forEach(function (b, i) {
    var x = (b - 1) * BAR;
    if (i !== 0) tick(lanes.snare, x, 0, 3, 34, 'hat-b');
    tick(lanes.snare, x + (i === 0 ? 0 : 6), 0, 2, 34, 'hat-d');
    tick(lanes.snare, x + (i === 0 ? 6 : 9), 0, 2, 34, 'hat-d');
  });

  /* ride */
  [[33, 40], [73, 80], [81, 88]].forEach(function (s) {
    var x0 = px(s[0]), x1 = px(s[1]);
    for (var x = x0; x < x1; x += 8.7) tick(lanes.ride, x, 0, 2, 34, 'ride-d');
    for (var y = x0 + 34; y < x1; y += 26.1) tick(lanes.ride, y, 0, 2, 34, 'ride-b');
  });

  /* chord & sub */
  var patA = [[23], [16], [58], [0, 7, 50], [30], [36, 43, 64]];
  var patB = [[23], [16], [56, 65], [1, 7, 52], [28], [35, 42, 49]];
  var widths = [2, 3, 3, 5, 2, 4, 3];
  function notes(lane, startBar, endBar, rows, h) {
    var wi = 0;
    for (var b = startBar, k = 0; b < endBar; b += 2, k++) {
      var p = k % 2 ? patB : patA;
      for (var r = 0; r < 6; r++) {
        p[r].forEach(function (off) {
          tick(lane, px(b) + off, rows[r], widths[wi++ % widths.length], h, 'note');
        });
      }
    }
  }
  clip('chord', 1, 89, '', { body: true });
  var chordRows = [126, 138, 150, 162, 174, 186];
  notes(lanes.chord, 9, 89, chordRows, 10);
  for (var q = 393; q < 3070; q += 139.2) tick(lanes.chord, q, 42, 2, 10, 'note');

  clip('sub', 1, 89, '', { body: true, theme: 't-violet' });
  var subRows = [36, 58, 80, 102, 124, 146];
  notes(lanes.sub, 17, 41, subRows, 20);
  notes(lanes.sub, 57, 89, subRows, 20);

  /* vox */
  [25, 41, 65, 81].forEach(function (e) {
    [[-33, 8], [-17, 10], [-7, 4], [-3, 3]].forEach(function (p) {
      var c = clip('vox', e, e, '', { body: true, offset: p[0], w: p[1] });
      add(c.body, 'vx-w a'); add(c.body, 'vx-w b');
    });
    mini(lanes.vox, e - 1, e);
  });
  add(lanes.vox, 'playhead');

  /* revers chord */
  clip('rchord', 7.5, 9, 'Audi', { cls: 'diag' });
  [16, 32, 56, 72].forEach(function (b) { clip('rchord', b, b + 1, 'Aud', { cls: 'diag' }); });

  /* snare fill */
  [9, 17, 33, 57, 73].forEach(function (e) {
    var x = px(e) - 14;
    tick(lanes.sfill, x, 0, 14, 34, 'fill-d');
    [1, 6, 10].forEach(function (o) { tick(lanes.sfill, x + o, 1, 3, 32, 'fill-b'); });
    mini(lanes.sfill, e - 0.4, e);
  });

  /* vox 2 / vox 3 */
  [1, 17, 25, 33, 57, 65, 73].forEach(function (b) { clip('vox2', b, b + 1, 'TSD'); });
  [9, 49].forEach(function (b) { clip('vox2', b, b + 2, 'rah_fx', { theme: 't-grey', cls: 'rah' }); });
  [5, 21, 29, 37, 61, 69, 77].forEach(function (b) { clip('vox3', b, b + 1, 'TSD'); });

  /* vocal */
  function wave(body, width, colour, fn) {
    var ns = 'http://www.w3.org/2000/svg';
    var s = document.createElementNS(ns, 'svg');
    s.setAttribute('class', 'wave');
    s.setAttribute('width', width);
    s.setAttribute('height', 72);
    [17, 53].forEach(function (cy) {
      var top = '', bot = '';
      var a = [];
      for (var x = 0; x <= width; x += 1.5) a.push([x, fn(x)]);
      a.forEach(function (p, i) { top += (i ? 'L' : 'M') + p[0] + ' ' + (cy - p[1]).toFixed(1); });
      a.reverse().forEach(function (p) { bot += 'L' + p[0] + ' ' + (cy + p[1]).toFixed(1); });
      var path = document.createElementNS(ns, 'path');
      path.setAttribute('d', top + bot + 'Z');
      path.setAttribute('fill', colour);
      s.appendChild(path);
    });
    body.appendChild(s);
  }
  function lumps(list, base) {
    return function (x) {
      var v = base;
      list.forEach(function (l) {
        var d = (x - l[0]) / l[2];
        v += l[1] * Math.exp(-d * d);
      });
      return v + rnd() * 0.9;
    };
  }
  var noiseAmp = function (x) { return 6 + rnd() * 2.5 + Math.sin(x / 9) * 0.8; };
  function pink(b, e, name) {
    var c = clip('vocal', b, e, name, { body: true });
    wave(c.body, px(e) - px(b), '#251a22', noiseAmp);
  }
  var vocalAmp = lumps([[4, 6, 3], [14, 10, 5], [32, 8, 6], [52, 9, 6], [70, 8, 6], [90, 13, 6], [112, 7, 4], [132, 6, 4]], 2);
  var ukgnAmp = lumps([[25, 7, 5], [62, 8, 8], [95, 7, 5]], 1);
  var bosAmp = function (x) { return 6 + rnd() * 2.5 + Math.sin(x / 13) * 1.5 - (x > 125 ? (x - 125) * 0.3 : 0); };
  function ghost(b, e, name, fn) {
    var c = clip('vocal', b, e, name, { body: true, theme: 't-grey', cls: 'ghost' });
    wave(c.body, px(e) - px(b), '#6b6b6b', fn);
  }
  pink(9, 17, 'BOS_TLC_125_Kit_Vocal_Lo');
  ghost(17, 21, 'ah_vox120_ba', vocalAmp);
  ghost(21, 24, 'ukgn_130_', ukgnAmp);
  pink(32, 33, 'BOS');
  ghost(37, 41, 'BOS_TLC_125', bosAmp);
  pink(49, 57, 'BOS_TLC_125_Kit_Vocal_Lo');
  ghost(57, 61, 'ah_vox120_ba', vocalAmp);
  ghost(61, 64, 'ukgn_130_', ukgnAmp);
  pink(72, 73, 'BOS');

  /* uplifters */
  [[5, 8, 'T_TSMK5'], [13, 16, 'T_TSMK5'], [33, 41, 'T_TSMK5_124_fx_oneshot_'], [53, 56, 'T_TSMK5'], [85, 88, 'T_TSMK5']].forEach(function (u) {
    clip('up1', u[0], u[1], u[2], { cls: 'diag' });
  });
  [[5.5, 8], [13.5, 16], [29.5, 32], [53.5, 56], [69.5, 72], [85.5, 88]].forEach(function (u) {
    clip('up2', u[0], u[1], 'T_TSMK5');
  });

  /* string */
  seq('string', [33, 37, 41, 45, 49, 53, 56], 'osh_125_kit_');
  seq('string', [73, 77, 81, 85, 88], 'osh_125_kit_');

  /* crash */
  clip('crash', 7.5, 9, 'KARI');
  [15, 23, 31, 39, 55, 63, 71, 79, 87].forEach(function (b) { clip('crash', b, b + 1, 'KAR'); });

  /* downlifter */
  [13, 17, 33, 53, 57, 73, 81].forEach(function (b) { clip('down', b, b + 2, 'ukg_fx', { cls: 'diag2' }); });

  /* downlifter 2 */
  [[1, 9], [33, 41], [41, 49], [73, 81], [81, 89]].forEach(function (d) {
    clip('down2', d[0], d[1], 'PM_PS_Fx_One_Shot_Down');
  });

  /* overview cursor */
  add(ov, 'ov-cursor', { left: '2626px' });

  /* bar ruler */
  var bars = document.getElementById('bars');
  for (var n = 1; n <= 89; n += 4) {
    var x = Math.round((n - 1) * BAR);
    add(bars, 'bar-tick', { left: x + 'px' });
    add(bars, 'bar-minor', { left: Math.round(x + 2 * BAR) + 'px' });
    var s = document.createElement('span');
    s.className = 'bar-num';
    s.textContent = n;
    s.style.left = (x + 8) + 'px';
    bars.appendChild(s);
  }

  /* time ruler */
  var times = document.getElementById('times');
  var TEN = 182.7;
  for (var t = 0; t <= 17; t++) {
    var tx = Math.round(t * TEN) - 1;
    if (t > 0) add(times, 'time-major', { left: tx + 'px' });
    for (var m = 1; m < 5; m++) add(times, 'time-minor', { left: Math.round(tx + m * TEN / 5) + 'px' });
    if (t < 17) {
      var lb = document.createElement('span');
      lb.className = 'time-label';
      lb.textContent = Math.floor(t / 6) + ':' + (t % 6) + '0';
      lb.style.left = (tx + 6) + 'px';
      times.appendChild(lb);
    }
  }
  add(times, 'time-tri');
})();
```
